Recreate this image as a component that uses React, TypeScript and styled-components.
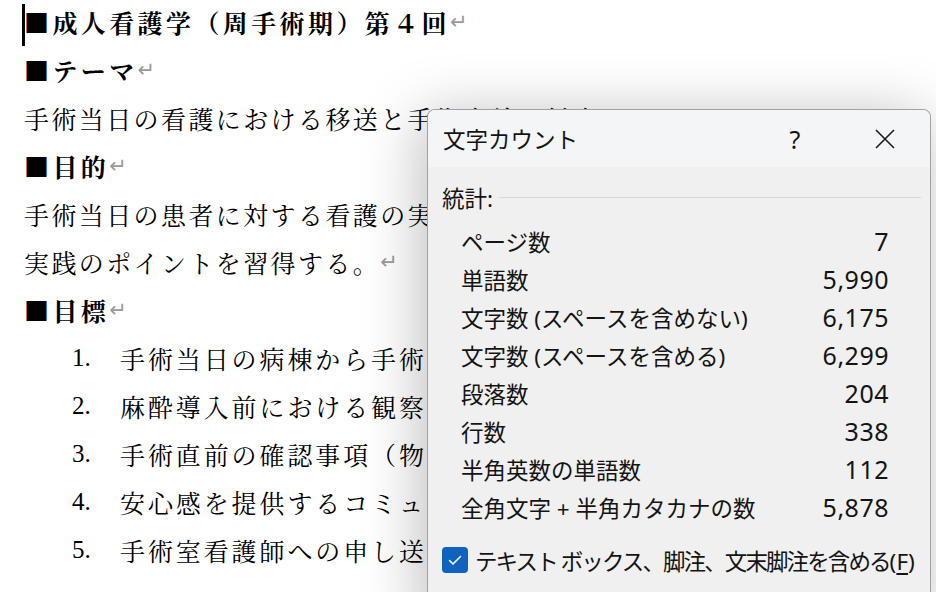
import React from "react";
import styled, { createGlobalStyle } from "styled-components";

const Global = createGlobalStyle`
  html, body { margin: 0; padding: 0; background: #fff; }
  body { width: 936px; height: 592px; overflow: hidden; }
`;

const Page = styled.div`
  position: relative;
  width: 936px;
  height: 592px;
  overflow: hidden;
  background: #fff;
`;

const Doc = styled.div`
  margin-top: -2px;
  padding: 0 0 0 24px;
  font-family: "Noto Serif CJK JP", "IPAexMincho", "IPAMincho", "Noto Sans CJK JP", serif;
  font-size: 25px;
  letter-spacing: 2.4px;
  color: #000;
`;

const Line = styled.div<{ $bold?: boolean; $indent?: number }>`
  position: relative;
  height: 48px;
  display: flex;
  align-items: center;
  white-space: nowrap;
  font-weight: ${(p) => (p.$bold ? 700 : 400)};
  letter-spacing: ${(p) => (p.$bold ? "3.4px" : p.$indent ? "2.9px" : "2.4px")};
  padding-left: ${(p) => p.$indent ?? 0}px;
`;

const Caret = styled.span`
  position: absolute;
  left: -2px;
  top: 6px;
  width: 3px;
  height: 42px;
  background: #000;
`;

const Mark = styled.span`
  font-family: "DejaVu Sans", sans-serif;
  font-weight: 400;
  font-size: 21px;
  letter-spacing: 0;
  color: #9a9a9a;
`;

const Num = styled.span`
  display: inline-block;
  width: 48px;
  font-family: "Liberation Serif", serif;
  letter-spacing: 0;
`;

const Dialog = styled.div`
  position: absolute;
  left: 427px;
  top: 109px;
  width: 504px;
  height: 520px;
  box-sizing: border-box;
  border: 1px solid rgba(0, 0, 0, 0.33);
  border-radius: 8px;
  background: #f0f0f0;
  box-shadow: -6px 6px 60px rgba(0, 0, 0, 0.26);
  overflow: hidden;
  font-family: "Noto Sans", "Noto Sans CJK JP", sans-serif;
  font-size: 22.5px;
  color: #141414;
`;

const TitleBar = styled.div`
  height: 57px;
  display: flex;
  align-items: center;
  padding-left: 15px;
  background: #f3f5f7;
`;

const Title = styled.div`
  flex: 1;
`;

const WinButton = styled.div`
  width: 90px;
  height: 57px;
  display: flex;
  align-items: center;
  justify-content: center;
  font-size: 25px;
`;

const Body = styled.div`
  padding: 15px 9px 0 14px;
`;

const Section = styled.div`
  display: flex;
  align-items: center;
  height: 30px;
`;

const Rule = styled.div`
  flex: 1;
  height: 1px;
  margin-left: 6px;
  background: #d9d9d9;
`;

const Stats = styled.div`
  margin-top: 10px;
  padding: 0 32px 0 19px;
`;

const StatRow = styled.div`
  height: 38px;
  display: flex;
  align-items: center;
  justify-content: space-between;
`;

const Value = styled.span`
  font-size: 25px;
  letter-spacing: 0.5px;
`;

const CheckRow = styled.div`
  margin-top: 19px;
  height: 30px;
  display: flex;
  align-items: center;
  gap: 7px;
  white-space: nowrap;
`;

const CheckBox = styled.div`
  width: 26px;
  height: 26px;
  flex: none;
  border-radius: 4px;
  background: #0f62be;
  display: flex;
  align-items: center;
  justify-content: center;
`;

const CheckLabel = styled.span`
  letter-spacing: -1.9px;
`;

const Shortcut = styled.span`
  letter-spacing: 0;
`;

const Accel = styled.span`
  text-decoration: underline;
  text-underline-offset: 3px;
`;

const stats: [string, string][] = [
  ["ページ数", "7"],
  ["単語数", "5,990"],
  ["文字数 (スペースを含めない)", "6,175"],
  ["文字数 (スペースを含める)", "6,299"],
  ["段落数", "204"],
  ["行数", "338"],
  ["半角英数の単語数", "112"],
  ["全角文字 + 半角カタカナの数", "5,878"],
];

const goals = [
  "手術当日の病棟から手術室までの移送を理解する。",
  "麻酔導入前における観察項目を理解する。",
  "手術直前の確認事項（物品・患者）を理解する。",
  "安心感を提供するコミュニケーションを理解する。",
  "手術室看護師への申し送りを理解する。",
];

export default function App() {
  return (
    <Page>
      <Global />
      <Doc>
        <Line $bold>
          <Caret />
          ■成人看護学（周手術期）第４回<Mark>↵</Mark>
        </Line>
        <Line $bold>
          ■テーマ<Mark>↵</Mark>
        </Line>
        <Line>手術当日の看護における移送と手術室前の対応<Mark>↵</Mark></Line>
        <Line $bold>
          ■目的<Mark>↵</Mark>
        </Line>
        <Line>手術当日の患者に対する看護の実際を理解し、安全な</Line>
        <Line>
          実践のポイントを習得する。<Mark>↵</Mark>
        </Line>
        <Line $bold>
          ■目標<Mark>↵</Mark>
        </Line>
        {goals.map((g, i) => (
          <Line key={i} $indent={48}>
            <Num>{i + 1}.</Num>
            {g}
          </Line>
        ))}
      </Doc>

      <Dialog>
        <TitleBar>
          <Title>文字カウント</Title>
          <WinButton>?</WinButton>
          <WinButton>
            <svg width="22" height="22" viewBox="0 0 22 22">
              <path d="M2 2 L20 20 M20 2 L2 20" stroke="#1a1a1a" strokeWidth="1.6" fill="none" />
            </svg>
          </WinButton>
        </TitleBar>
        <Body>
          <Section>
            統計:
            <Rule />
          </Section>
          <Stats>
            {stats.map(([label, value]) => (
              <StatRow key={label}>
                <span>{label}</span>
                <Value>{value}</Value>
              </StatRow>
            ))}
          </Stats>
          <CheckRow>
            <CheckBox>
              <svg width="16" height="16" viewBox="0 0 16 16">
                <path d="M2.5 8.5 L6 12 L13.5 4.5" stroke="#fff" strokeWidth="1.6" fill="none" strokeLinecap="round" strokeLinejoin="round" />
              </svg>
            </CheckBox>
            <CheckLabel>
              テキスト ボックス、脚注、文末脚注を含める
              <Shortcut>
                (<Accel>F</Accel>)
              </Shortcut>
            </CheckLabel>
          </CheckRow>
        </Body>
      </Dialog>
    </Page>
  );
}
